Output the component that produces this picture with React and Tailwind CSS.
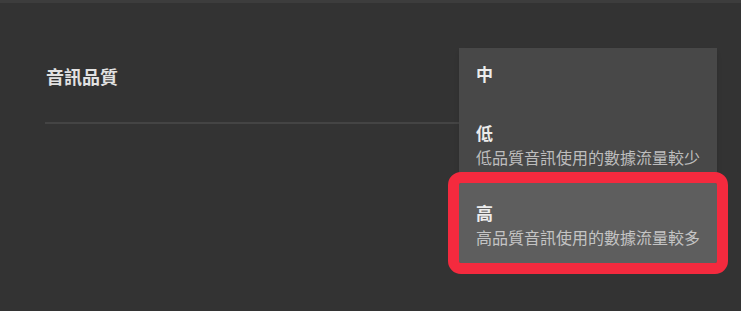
export default function App() {
  const font = { fontFamily: '"Noto Sans CJK TC", "Noto Sans", sans-serif' };
  return (
    <div className="relative w-[741px] h-[311px] bg-[#333333] overflow-hidden" style={font}>
      <div className="h-[3px] bg-[#3d3d3d]" />
      <div className="pl-[45px] pr-[24px]">
        <div className="pt-[64px] pl-[1px] text-[18px] leading-none font-bold text-[#e2e2e2]">音訊品質</div>
        <div className="mt-[37px] h-[2px] bg-[#444444]" />
      </div>
      <div className="absolute left-[459px] top-[48px] w-[258px] bg-[#484848] shadow-md">
        <div className="h-[55px] pt-[17px] pl-[17px] text-[17px] leading-none font-bold text-[#ececec]">中</div>
        <div className="h-[80px] pt-[21px] pl-[17px]">
          <div className="text-[17px] leading-none font-bold text-[#ececec]">低</div>
          <div className="mt-[8px] text-[16px] leading-none text-[#bdbdbd]">低品質音訊使用的數據流量較少</div>
        </div>
        <div className="h-[80px] pt-[21px] pl-[17px] bg-[#5e5e5e] rounded-[2px] outline-[11px] outline-solid outline-[#f42a3e]">
          <div className="text-[17px] leading-none font-bold text-[#ececec]">高</div>
          <div className="mt-[8px] text-[16px] leading-none text-[#c4c4c4]">高品質音訊使用的數據流量較多</div>
        </div>
      </div>
    </div>
  );
}
